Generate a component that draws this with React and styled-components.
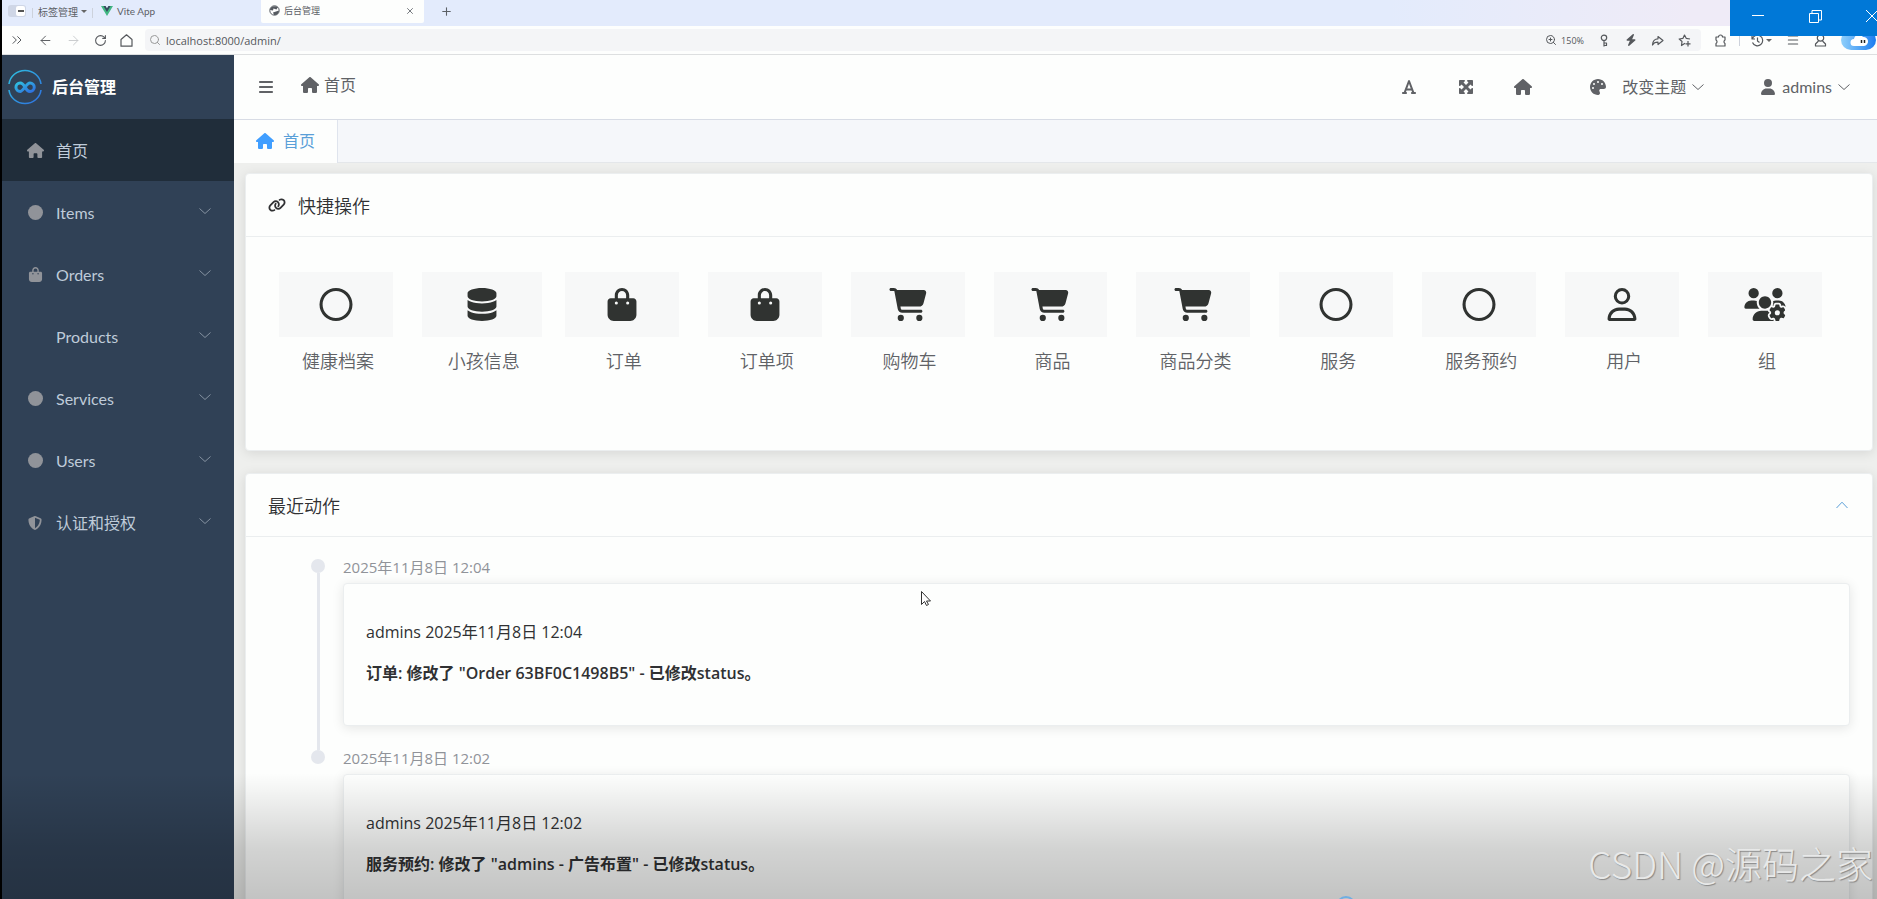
import * as React from 'react';
import styled, { createGlobalStyle } from 'styled-components';
import {
  FaBagShopping,
  FaBars,
  FaBolt,
  FaCartShopping,
  FaCircle,
  FaDatabase,
  FaFont,
  FaHouse,
  FaLink,
  FaMaximize,
  FaPalette,
  FaRegCircle,
  FaRegUser,
  FaShieldHalved,
  FaUser,
  FaUsersGear,
} from 'react-icons/fa6';
import {
  ArrowLeft,
  ArrowRight,
  ChevronsRight,
  Menu,
  Plus,
  RotateCw,
  Search,
  X,
  ZoomIn,
} from 'lucide-react';

const uiFont = `Lato, 'Noto Sans CJK SC', sans-serif`;
const textFont = `'Open Sans', 'Noto Sans CJK SC', sans-serif`;
const cjkFont = `'Noto Sans CJK SC', sans-serif`;

const GlobalStyle = createGlobalStyle`
  * {
    box-sizing: border-box;
  }
  body {
    margin: 0;
    font-family: ${uiFont};
    color: #303133;
    background: #000;
  }
  button, input {
    font: inherit;
    color: inherit;
    border: none;
    padding: 0;
    background: none;
    outline: none;
  }
  a {
    color: inherit;
    text-decoration: none;
  }
  svg {
    display: block;
    flex: none;
  }
  h1, h2, p, ol, ul {
    margin: 0;
    padding: 0;
    font-weight: normal;
    list-style: none;
  }
`;

const Shell = styled.div`
  position: relative;
  display: flex;
  flex-direction: column;
  height: 100vh;
  margin-left: 2px;
  overflow: hidden;
  background: #eeefed;
`;

/* browser chrome */

const TabStrip = styled.div`
  flex: none;
  display: flex;
  align-items: center;
  height: 26px;
  padding-left: 6px;
  font-size: 10px;
  color: #5c6066;
  background: linear-gradient(90deg, #e3ebfc 0 74%, #efebf7 90%);
`;

const PanelToggle = styled.button`
  display: flex;
  justify-content: flex-end;
  width: 18px;
  height: 12px;
  margin: 0 6px 5px 0;
  border-radius: 3px;
  background: #cfd6e6;

  &::before {
    content: '';
    width: 9px;
    height: 10px;
    margin: 1px;
    border-radius: 2px;
    background: linear-gradient(#555, #555) center / 6px 2px no-repeat #fff;
  }
`;

const Divider = styled.span`
  width: 1px;
  height: ${(p) => p.$height || 10}px;
  background: #cdd2dc;
`;

const StripButton = styled.button`
  display: flex;
  align-items: center;
  gap: 3px;
  height: 20px;
  margin: 0 5px 4px;
  white-space: nowrap;
`;

const Caret = styled.span`
  border: 3px solid transparent;
  border-top-color: #666;
  border-bottom: 0;
`;

const BrowserTab = styled.div`
  display: flex;
  align-items: center;
  gap: 4px;
  align-self: flex-start;
  width: ${(p) => p.$width}px;
  height: 23px;
  padding: 0 9px 2px 8px;
  border-radius: 0 0 2px 2px;
  font-size: ${(p) => (p.$active ? 9 : 10)}px;
  background: ${(p) => (p.$active ? '#fdfefd' : 'transparent')};

  button {
    margin-left: auto;
  }
`;

const NewTab = styled.button`
  margin: 0 0 4px 16px;
`;

const AddressRow = styled.div`
  flex: none;
  display: flex;
  align-items: center;
  height: 29px;
  padding-left: 7px;
  color: #55585c;
  background: #fdfefd;
  border-bottom: 1px solid #dddfe0;
`;

const NavButtons = styled.div`
  display: flex;
  align-items: center;
  gap: 13px;
  margin-right: 12px;

  button:nth-child(3) {
    color: #c8cacc;
  }
`;

const AddressField = styled.div`
  flex: 1;
  display: flex;
  align-items: center;
  gap: 5px;
  height: 22px;
  padding: 0 10px 0 4px;
  border-radius: 4px;
  background: #f4f5f7;

  input {
    flex: 1;
    font-family: ${textFont};
    font-size: 11px;
  }
`;

const FieldTools = styled.div`
  display: flex;
  align-items: center;
  gap: 14px;
`;

const ZoomLevel = styled.button`
  display: flex;
  align-items: center;
  gap: 4px;
  font-family: ${textFont};
  font-size: 9px;
`;

const Extensions = styled.div`
  display: flex;
  align-items: center;
  gap: 12px;
  margin-left: 13px;

  button {
    display: flex;
    align-items: center;
    gap: 2px;
  }
`;

const MoreExtensions = styled(Extensions)`
  gap: 14px;
  margin-left: 11px;
`;

const WindowControls = styled.div`
  position: absolute;
  top: 0;
  right: 0;
  z-index: 3;
  display: flex;
  align-items: center;
  justify-content: space-between;
  width: 147px;
  height: 36px;
  padding: 0 0 4px 22px;
  overflow: hidden;
  background: #0078d7;
`;

/* sidebar */

const Workspace = styled.div`
  flex: 1;
  display: flex;
  min-height: 0;
`;

const Sidebar = styled.nav`
  flex: none;
  width: 232px;
  background: #304156;
`;

const Brand = styled.a`
  display: flex;
  align-items: center;
  gap: 10px;
  height: 64px;
  padding: 0 6px;
  font-size: 16px;
  font-weight: bold;
  line-height: 20px;
  color: #fff;
`;

const MenuItem = styled.button`
  display: flex;
  align-items: center;
  width: 100%;
  height: 62px;
  padding: 1px 23px 0 24px;
  font-size: 16px;
  line-height: 20px;
  text-align: left;
  color: #bfcbd9;
  background: ${(p) => (p.$active ? '#202d3a' : 'transparent')};

  & > svg {
    margin: 0 0 4px auto;
    color: #8592a1;
  }
`;

const MenuIcon = styled.span`
  display: flex;
  justify-content: center;
  width: 18px;
  margin-right: 12px;
  color: #909399;
`;

/* top bar */

const Main = styled.main`
  flex: 1;
  display: flex;
  flex-direction: column;
  min-width: 0;
`;

const TopBar = styled.header`
  flex: none;
  display: flex;
  align-items: center;
  height: 65px;
  padding: 0 27px 0 24px;
  font-size: 16px;
  line-height: 20px;
  color: #606266;
  background: #fdfefd;
  border-bottom: 1px solid #d8dce5;
`;

const Breadcrumb = styled.a`
  display: flex;
  align-items: center;
  gap: 5px;
  margin: 0 auto 4px 27px;
`;

const Tools = styled.div`
  display: flex;
  align-items: center;
  gap: 39px;
  margin-right: 2px;

  svg {
    width: 18px;
    height: 16px;
  }
`;

const DropButton = styled.button`
  display: flex;
  align-items: center;
  gap: 6px;
  margin-left: 56px;
  white-space: nowrap;

  svg:first-child {
    margin-right: ${(p) => p.$inset || 0}px;
  }
`;

const PageTabs = styled.div`
  flex: none;
  display: flex;
  height: 43px;
  background: #f5f7fa;
  border-bottom: 1px solid #e4e7ea;
`;

const PageTab = styled.a`
  display: flex;
  align-items: center;
  gap: 9px;
  height: 43px;
  padding: 0 22px 2px;
  font-size: 16px;
  line-height: 20px;
  color: #5a9fd8;
  background: #fdfefd;
  border-right: 1px solid #dfe4ed;

  svg {
    color: #409eff;
  }
`;

/* cards */

const Content = styled.div`
  flex: 1;
  display: flex;
  flex-direction: column;
  gap: 22px;
  min-height: 0;
  padding: 10px 4px 0 11px;
`;

const Card = styled.section`
  flex: none;
  border: 1px solid #ebeeef;
  border-radius: 4px;
  background: #fdfefd;
  box-shadow: 0 2px 12px rgba(0, 0, 0, 0.1);
`;

const CardHeader = styled.header`
  display: flex;
  align-items: center;
  justify-content: space-between;
  height: 63px;
  padding: 0 24px 0 22px;
  border-bottom: 1px solid #ebeeef;

  h2 {
    display: flex;
    align-items: center;
    gap: 12px;
    font-family: ${cjkFont};
    font-size: 18px;
    font-weight: 350;
    line-height: 24px;
  }
`;

const QuickGrid = styled.div`
  display: grid;
  grid-template-columns: repeat(11, 1fr);
  min-height: 213px;
  padding: 35px 21px 0 33px;
`;

const QuickLink = styled.a`
  display: flex;
  flex-direction: column;
  align-items: center;
  width: calc(100% - ${(p) => (p.$wide ? 23 : 29)}px);
  font-family: ${cjkFont};
  font-size: 18px;
  font-weight: 350;
  line-height: 24px;
  color: #606266;
  white-space: nowrap;
`;

const Tile = styled.span`
  display: flex;
  align-items: center;
  justify-content: center;
  width: 100%;
  height: 65px;
  margin-bottom: 11px;
  color: #303331;
  background: #f7f8f8;

  svg {
    width: 42px;
    height: 33px;
  }
`;

const QuickLabel = styled.span`
  padding-left: 4px;
`;

const Timeline = styled.ol`
  padding: 22px 22px 0 65px;
`;

const Entry = styled.li`
  display: grid;
  grid-template-columns: 14px 1fr;
  column-gap: 18px;
  height: 191px;
`;

const Track = styled.span`
  display: flex;
  flex-direction: column;
  align-items: center;

  &::before {
    content: '';
    width: 14px;
    height: 14px;
    border-radius: 50%;
    background: #e4e7ed;
  }
  &::after {
    content: '';
    flex: 1;
    width: 3px;
    background: ${(p) => (p.$last ? 'transparent' : '#e4e7ed')};
  }
`;

const EntryBody = styled.div`
  font-family: ${textFont};

  time {
    display: block;
    height: 24px;
    font-size: 15px;
    line-height: 17px;
    color: #909399;
  }
`;

const EntryCard = styled(Card)`
  height: 143px;
  padding: 36px 22px;
  font-size: 16px;
  line-height: 24px;

  p + p {
    margin-top: 17px;
    font-weight: 600;
  }
`;

/* layers over the page */

const Fade = styled.div`
  position: absolute;
  inset: auto 0 0 -2px;
  z-index: 1;
  height: 126px;
  pointer-events: none;
  background: linear-gradient(rgba(0, 0, 0, 0), rgba(0, 0, 0, 0.17) 60%, rgba(0, 0, 0, 0.23));
`;

const Watermark = styled.div`
  position: absolute;
  right: 4px;
  bottom: 12px;
  z-index: 2;
  font-family: ${cjkFont};
  font-size: 37px;
  font-weight: 300;
  line-height: 48px;
  color: #e8e9e9;
  text-shadow: 1px 1px 1px #888;
`;

const Pointer = styled.svg`
  position: absolute;
  left: 918px;
  top: 590px;
  z-index: 2;
`;

const Ring = styled.span`
  position: absolute;
  left: 1334px;
  bottom: -17px;
  z-index: 2;
  width: 20px;
  height: 20px;
  border: 2px solid #70aee2;
  border-radius: 50%;
`;

const Chevron = ({ up, ...rest }) => (
  <svg width="12" height="8" viewBox="0 0 12 8" fill="none" stroke="currentColor" {...rest}>
    <path d={up ? 'M.5 7 6 1.200 11.500 7' : 'M.5 1.500 6 6.500 11.500 1.500'} />
  </svg>
);

const LineIcon = ({ children }) => (
  <svg
    width="13"
    height="13"
    viewBox="0 0 13 13"
    fill="none"
    stroke="currentColor"
    strokeWidth="1.200"
    strokeLinejoin="round"
  >
    {children}
  </svg>
);

const BrandMark = () => (
  <svg width="34" height="36" viewBox="0 0 34 36" fill="none">
    <defs>
      <linearGradient id="brand" x1="0" y1="0" x2="1" y2="1">
        <stop offset="0" stopColor="#2fc0e0" />
        <stop offset="1" stopColor="#2f6fe0" />
      </linearGradient>
    </defs>
    <path
      d="M1 15C2 7 9 1.500 17 1.500S32 7 33 15M1 21C2 29 9 34.500 17 34.500S32 29 33 21"
      stroke="url(#brand)"
      strokeWidth="1.600"
    />
    <path
      d="M17 18C15.500 15.500 14.200 14 12.200 14a4 4 0 0 0 0 8.500C15 22.500 18.500 14 22 14a4.200 4.200 0 0 1 0 8.500C20 22.500 18.500 21 17 18Z"
      stroke="url(#brand)"
      strokeWidth="3"
    />
  </svg>
);

const VueMark = () => (
  <svg width="12" height="10" viewBox="0 0 12 10">
    <path d="M0 0h12L6 10Z" fill="#42b883" />
    <path d="M2.400 0h7.200L6 6Z" fill="#35495e" />
    <path d="M4.600 0h2.800L6 2.300Z" fill="#e3ebfc" />
  </svg>
);

const GlobeMark = () => (
  <svg width="11" height="11" viewBox="0 0 11 11">
    <circle cx="5.500" cy="5.500" r="4.700" fill="#fff" stroke="#555a60" />
    <path d="M1 5C1 2 5 0 9 2L7.500 4.500 4.500 3.500 4 5.500ZM4 7.500l6-2c0 3-2 5-5 4.500Z" fill="#555a60" />
  </svg>
);

const CloudMark = () => (
  <svg width="36" height="20" viewBox="0 0 36 20">
    <defs>
      <linearGradient id="cloud">
        <stop offset="0" stopColor="#8fd0fb" />
        <stop offset="1" stopColor="#1c7cf0" />
      </linearGradient>
    </defs>
    <rect width="35" height="20" rx="10" fill="url(#cloud)" />
    <path d="M13 16a3.500 3.500 0 0 1 0-7 5 5 0 0 1 9-2 4.500 4.500 0 0 1 1 9Z" fill="#fff" />
    <path d="M20.500 10v3M23.500 10v3" stroke="#222" strokeWidth="1.500" />
  </svg>
);

const menu = [
  { label: '首页', icon: <FaHouse size={17} />, active: true },
  { label: 'Items', icon: <FaCircle size={15} /> },
  { label: 'Orders', icon: <FaBagShopping size={15} /> },
  { label: 'Products' },
  { label: 'Services', icon: <FaCircle size={15} /> },
  { label: 'Users', icon: <FaCircle size={15} /> },
  { label: '认证和授权', icon: <FaShieldHalved size={14} /> },
];

const quickLinks = [
  { label: '健康档案', icon: FaRegCircle },
  { label: '小孩信息', icon: FaDatabase, wide: true },
  { label: '订单', icon: FaBagShopping },
  { label: '订单项', icon: FaBagShopping },
  { label: '购物车', icon: FaCartShopping },
  { label: '商品', icon: FaCartShopping },
  { label: '商品分类', icon: FaCartShopping },
  { label: '服务', icon: FaRegCircle },
  { label: '服务预约', icon: FaRegCircle },
  { label: '用户', icon: FaRegUser },
  { label: '组', icon: FaUsersGear },
];

const actions = [
  {
    time: '2025年11月8日 12:04',
    text: '订单: 修改了 "Order 63BF0C1498B5" - 已修改status。',
  },
  {
    time: '2025年11月8日 12:02',
    text: '服务预约: 修改了 "admins - 广告布置" - 已修改status。',
  },
];

const Browser = () => (
  <>
    <TabStrip>
      <PanelToggle aria-label="Toggle panel" />
      <Divider />
      <StripButton>
        标签管理 <Caret />
      </StripButton>
      <Divider />
      <BrowserTab $width={168}>
        <VueMark />
        Vite App
      </BrowserTab>
      <BrowserTab $width={163} $active>
        <GlobeMark />
        后台管理
        <button aria-label="Close tab">
          <X size={10} />
        </button>
      </BrowserTab>
      <NewTab aria-label="New tab">
        <Plus size={13} />
      </NewTab>
    </TabStrip>
    <AddressRow>
      <NavButtons>
        <button aria-label="Expand">
          <ChevronsRight size={16} strokeWidth={1.5} />
        </button>
        <button aria-label="Back">
          <ArrowLeft size={15} strokeWidth={1.5} />
        </button>
        <button aria-label="Forward">
          <ArrowRight size={15} strokeWidth={1.5} />
        </button>
        <button aria-label="Reload">
          <RotateCw size={13} />
        </button>
        <button aria-label="Home">
          <LineIcon>
            <path d="M1 5.500 6.500.8 12 5.500V12.200H1Z" />
          </LineIcon>
        </button>
      </NavButtons>
      <AddressField>
        <Search size={12} color="#999" />
        <input aria-label="Address" defaultValue="localhost:8000/admin/" />
        <FieldTools>
          <ZoomLevel>
            <ZoomIn size={12} /> 150%
          </ZoomLevel>
          <button aria-label="Passwords">
            <LineIcon>
              <circle cx="6" cy="3.800" r="2.700" />
              <path d="M6 6.500v6M6 9h2.500v2.500H6" />
            </LineIcon>
          </button>
          <button aria-label="Boost">
            <FaBolt size={12} />
          </button>
          <button aria-label="Share">
            <LineIcon>
              <path d="M7 2.500 12 6.500 7 10.500V8.200C4 8.200 2.500 9 1.500 11 1.500 7 4 4.800 7 4.800Z" />
            </LineIcon>
          </button>
          <button aria-label="Bookmark">
            <LineIcon>
              <path d="M7 9.200 3.500 11.500 4 7.500 1.200 5 5 4.300 6.500 1 8.200 4.300 12 5M10 7v5.500M7.500 9.800h5" />
            </LineIcon>
          </button>
        </FieldTools>
      </AddressField>
      <Extensions>
        <button aria-label="Extensions">
          <LineIcon>
            <path d="M2 3h2.500a2 2 0 0 1 4 0H11v3a2 2 0 0 0 0 3.500V12H2V9.500a2 2 0 0 0 0-3.500Z" />
          </LineIcon>
        </button>
        <Divider $height={12} />
      </Extensions>
      <MoreExtensions>
        <button aria-label="History">
          <LineIcon>
            <path d="M1 2v3h3M1.300 5a5.300 5.300 0 1 1 .2 3.500M6.500 3.500v3.500l2 1.500" />
          </LineIcon>
          <Caret />
        </button>
        <button aria-label="Menu">
          <Menu size={14} strokeWidth={1.75} />
        </button>
        <button aria-label="Profile">
          <LineIcon>
            <circle cx="6.500" cy="4" r="3.200" />
            <path d="M4.500 7 1.500 10v2h10v-2L8.500 7" />
          </LineIcon>
        </button>
        <button aria-label="Assistant">
          <CloudMark />
        </button>
      </MoreExtensions>
    </AddressRow>
    <WindowControls>
      <button aria-label="Minimize">
        <svg width="12" height="12" stroke="#fff">
          <path d="M0 5.500h12" />
        </svg>
      </button>
      <button aria-label="Restore">
        <svg width="13" height="13" fill="none" stroke="#fff">
          <path d="M.5 3.500h9v9h-9ZM3 3V.5h9.500V10H10" />
        </svg>
      </button>
      <button aria-label="Close">
        <svg width="11" height="12" stroke="#fff">
          <path d="M0 0l12 12M12 0L0 12" />
        </svg>
      </button>
    </WindowControls>
  </>
);

const App = () => (
  <Shell>
    <GlobalStyle />
    <Browser />
    <Workspace>
      <Sidebar>
        <Brand href="#home">
          <BrandMark />
          后台管理
        </Brand>
        {menu.map(({ label, icon, active }) => (
          <MenuItem key={label} $active={active}>
            <MenuIcon>{icon}</MenuIcon>
            {label}
            {!active && <Chevron />}
          </MenuItem>
        ))}
      </Sidebar>
      <Main>
        <TopBar>
          <button aria-label="Collapse menu">
            <FaBars size={16} />
          </button>
          <Breadcrumb href="#home">
            <FaHouse size={18} /> 首页
          </Breadcrumb>
          <Tools>
            <button aria-label="Font size">
              <FaFont />
            </button>
            <button aria-label="Fullscreen">
              <FaMaximize />
            </button>
            <button aria-label="Home page">
              <FaHouse />
            </button>
          </Tools>
          <DropButton $inset={10}>
            <FaPalette size={16} /> 改变主题 <Chevron />
          </DropButton>
          <DropButton>
            <FaUser size={16} /> admins <Chevron />
          </DropButton>
        </TopBar>
        <PageTabs>
          <PageTab href="#home">
            <FaHouse size={18} /> 首页
          </PageTab>
        </PageTabs>
        <Content>
          <Card>
            <CardHeader>
              <h2>
                <FaLink size={18} /> 快捷操作
              </h2>
            </CardHeader>
            <QuickGrid>
              {quickLinks.map(({ label, icon: Icon, wide }) => (
                <QuickLink key={label} href="#admin" $wide={wide}>
                  <Tile>
                    <Icon />
                  </Tile>
                  <QuickLabel>{label}</QuickLabel>
                </QuickLink>
              ))}
            </QuickGrid>
          </Card>
          <Card>
            <CardHeader>
              <h2>最近动作</h2>
              <button aria-label="Collapse">
                <Chevron up color="#5a9fd8" />
              </button>
            </CardHeader>
            <Timeline>
              {actions.map(({ time, text }, i) => (
                <Entry key={time}>
                  <Track $last={i === actions.length - 1} />
                  <EntryBody>
                    <time>{time}</time>
                    <EntryCard>
                      <p>admins {time}</p>
                      <p>{text}</p>
                    </EntryCard>
                  </EntryBody>
                </Entry>
              ))}
            </Timeline>
          </Card>
        </Content>
      </Main>
    </Workspace>
    <Fade />
    <Ring />
    <Watermark>CSDN @源码之家</Watermark>
    <Pointer width="12" height="18" viewBox="0 0 12 18" fill="#fff" stroke="#333">
      <path d="M1.500 1.500v13l3-3 2 4 2-1-2-3.500h4Z" />
    </Pointer>
  </Shell>
);

export default App;
